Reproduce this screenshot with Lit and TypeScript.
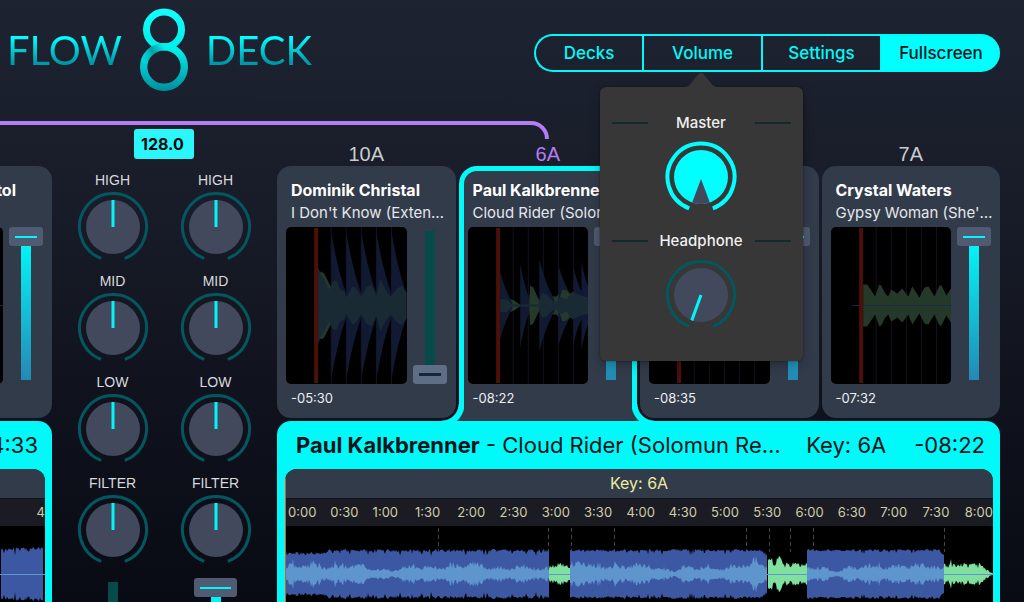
import { LitElement, html, svg, css, nothing } from "lit";
import { customElement, property } from "lit/decorators.js";
import { classMap } from "lit/directives/class-map.js";

/* ---------- wave helpers ---------- */

const noise = (seed: number) => {
  let s = seed;
  return () => {
    s = (s * 1664525 + 1013904223) % 4294967296;
    return s / 4294967296;
  };
};

type Amp = [number, number];

/** Closed outline mirrored around the mid line. */
const mirror = (points: Amp[], mid: number) => {
  const top = points.map(([x, a]) => `${x},${(mid - a).toFixed(1)}`);
  const bottom = [...points].reverse().map(([x, a]) => `${x},${(mid + a).toFixed(1)}`);
  return `M${top.join("L")}L${bottom.join("L")}Z`;
};

/** Dense band from x0 to x1 whose edge frays inwards by up to `jitter`. */
const band = (x0: number, x1: number, level: (x: number) => number, jitter: number, seed: number) => {
  const rnd = noise(seed);
  const pts: Amp[] = [];
  for (let x = x0; x <= x1; x += 1) {
    const spike = rnd() > 0.85 ? 1 : 0.45;
    pts.push([x, Math.max(0.5, level(x) - rnd() * jitter * spike)]);
  }
  return mirror(pts, 48);
};

/** Jagged band whose amplitude scatters in proportion to its level. */
const jagged = (x0: number, x1: number, level: (x: number) => number, seed: number) => {
  const rnd = noise(seed);
  const pts: Amp[] = [];
  for (let x = x0; x <= x1; x += 1) {
    const peak = rnd() > 0.9 ? 0.4 : 0;
    pts.push([x, Math.max(0.5, level(x) * (0.55 + rnd() * 0.55 + peak))]);
  }
  return mirror(pts, 48);
};

const swell = (x: number) => 7.5 + 1.5 * Math.sin(x / 9) + 1.5 * Math.sin(x / 3.7) + 2 * Math.sin(x / 23);

/* ---------- rotary knob ---------- */

@customElement("rotary-knob")
export class RotaryKnob extends LitElement {
  @property() label = "";
  @property() variant = "pointer";
  @property({ type: Number }) value = 50;
  @property({ type: Boolean, reflect: true }) panel = false;

  static styles = css`
    :host { display: block; }
    .knob { display: grid; justify-items: center; row-gap: 3px; }
    .name { font: 14px/16px "Liberation Sans", Arial, sans-serif; color: #d8dade; }
    .dial { display: grid; }
    .dial > * { grid-area: 1 / 1; width: 72px; height: 72px; margin: 0; }
    .input { opacity: 0; cursor: pointer; }
    .ring { fill: none; stroke: #04575f; stroke-width: 3; }
    .disc { fill: #42495c; }
    .hand { stroke: #00f6fb; stroke-width: 3; }
    .full .ring { stroke: #00ffff; stroke-width: 4; }
    .full .disc { fill: #00ffff; }
    .notch { fill: #42495c; }
    :host([panel]) .knob { row-gap: 8px; }
    :host([panel]) .name {
      display: grid;
      grid-template-columns: 36px 1fr 36px;
      align-items: center;
      justify-items: center;
      width: 100%;
      font: 500 15px/20px Inter, sans-serif;
      color: #f0f0f0;
    }
    :host([panel]) .name::before,
    :host([panel]) .name::after { content: ""; width: 36px; height: 2px; background: #13292d; }
  `;

  render() {
    const full = this.variant === "full";
    const angle = (this.value - 50) * 3.2;
    return html`
      <label class="knob">
        <span class="name">${this.label}</span>
        <span class="dial">
          <svg class=${classMap({ full })} viewBox="0 0 72 72" aria-hidden="true">
            <path class="ring" d="M24.2 67.4A33.5 33.5 0 1 1 47.8 67.4"></path>
            <circle class="disc" cx="36" cy="36" r="27"></circle>
            ${full
              ? svg`<path class="notch" d="M36 38L27.2 61.5A27 27 0 0 0 44.8 61.5Z"></path>`
              : svg`<path class="hand" d="M36 36V9" transform="rotate(${angle} 36 36)"></path>`}
          </svg>
          <input class="input" type="range" min="0" max="100" .value=${String(this.value)} />
        </span>
      </label>
    `;
  }
}

/* ---------- level fader ---------- */

@customElement("level-fader")
export class LevelFader extends LitElement {
  @property() label = "";
  @property({ type: Number }) value = 100;
  @property({ type: Boolean, reflect: true }) wide = false;

  static styles = css`
    :host { display: block; width: 34px; height: 157px; --knob: 34px; --mark: 22px; }
    :host([wide]) { width: 43px; --knob: 43px; --mark: 31px; }
    .fader {
      display: block;
      appearance: none;
      writing-mode: vertical-lr;
      direction: rtl;
      width: 100%;
      height: 100%;
      margin: 0;
      background: linear-gradient(#00ffff, #2489b4) center / 10px 149px no-repeat;
    }
    .fader.off { background-image: linear-gradient(#064b4a, #064b4a); }
    .fader::-webkit-slider-runnable-track { width: 100%; height: 100%; background: none; }
    .fader::-webkit-slider-thumb {
      appearance: none;
      width: var(--knob);
      height: 19px;
      border-radius: 3px;
      background: linear-gradient(#00f6fb, #00f6fb) center / var(--mark) 2px no-repeat, #505a70;
    }
    .fader.off::-webkit-slider-thumb {
      background: linear-gradient(#14283c, #14283c) center / var(--mark) 3px no-repeat, #5f6d85;
    }
  `;

  render() {
    return html`<input
      class=${classMap({ fader: true, off: this.value === 0 })}
      type="range" min="0" max="100"
      aria-label=${this.label}
      .value=${String(this.value)}
    />`;
  }
}

/* ---------- deck card ---------- */

const decays = (starts: Amp[], ends: Amp[]) =>
  starts
    .map(([x, a], i) => {
      const [ex, ea] = ends[i];
      const cx = x + (ex - x) * 0.4;
      const ca = ea + (a - ea) * 0.4;
      return `M${x},${78.5 - a}Q${cx},${78.5 - ca} ${ex},${78.5 - ea}V${78.5 + ea}Q${cx},${78.5 + ca} ${x},${78.5 + a}Z`;
    })
    .join("");

const m = (points: Amp[]) => mirror(points, 78.5);

const previews: Record<string, unknown> = {
  kicks: svg`
    <path class="low" d=${decays(
      [[32, 38], [45, 74], [60, 74], [75, 74], [90, 74], [105, 74]],
      [[45, 15], [60, 12], [75, 12], [90, 12], [105, 12], [120, 12]])}></path>
    <path class="high" d=${m([[32, 30], [35, 34], [38, 32], [42, 24], [45, 18], [45, 5], [32, 5]])}></path>
    <path class="body" d=${m([[32, 38], [34, 32], [38, 26], [43, 16], [47, 24], [50, 25], [54, 16], [58, 14], [60, 8], [66, 19], [69, 18], [75, 9], [80, 18], [85, 21], [90, 10], [94, 26], [99, 16], [104, 9], [110, 16], [115, 20], [120, 13]])}></path>`,
  breaks: svg`
    <path class="high" d=${m([[32, 4], [38, 8], [46, 5], [53, 0], [61, 2], [62, 20], [65, 18], [71, 5], [80, 9], [88, 9], [95, 17], [101, 12], [104, 12], [110, 10], [120, 6]])}></path>
    <path class="low" d=${decays(
      [[32, 34], [52, 42], [71, 46], [90, 40], [105, 39], [113, 44]],
      [[44, 3], [62, 4], [86, 6], [104, 8], [113, 14], [120, 18]])}></path>
    <path class="high" d=${m([[61, 2], [62, 20], [65, 16], [71, 3]])}></path>
    <path class="high" d=${m([[90, 4], [94, 16], [98, 15], [102, 11], [104, 5]])}></path>
    <path class="body" d=${m([[32, 6], [38, 7], [44, 1], [70, 1], [73, 12], [78, 11], [85, 4], [89, 4], [92, 9], [98, 6], [104, 14], [112, 10], [120, 8]])}></path>`,
  pads: svg`
    <path class="high" d=${m([[32, 21], [36, 21], [40, 15], [44, 9], [48, 21], [50, 20], [54, 12], [57, 9], [60, 16], [63, 14], [66, 12], [71, 17], [77, 9], [81, 19], [88, 8], [93, 18], [97, 19], [103, 9], [108, 20], [110, 20], [115, 10], [120, 18]])}></path>
    <path class="mid" d="M21 78.5H120"></path>`,
  flat: svg`<path class="mid" d="M21 78.5H120"></path>`,
};

@customElement("deck-card")
export class DeckCard extends LitElement {
  @property() artist = "";
  @property() track = "";
  @property() time = "";
  @property() preview = "flat";
  @property({ type: Number }) level = 100;
  @property({ type: Boolean, reflect: true }) active = false;
  @property({ type: Boolean, reflect: true }) tail = false;

  static styles = css`
    :host { display: block; min-width: 0; }
    .card {
      box-sizing: border-box;
      position: relative;
      height: 252px;
      padding: 12px 9px 11px;
      border-radius: 14px;
      background: #323b4a;
      font-family: Inter, sans-serif;
    }
    .artist, .track { padding-left: 5px; margin: 0; overflow: hidden; text-overflow: ellipsis; white-space: nowrap; }
    .artist { height: 24px; font-size: 16px; line-height: 24px; font-weight: 700; color: #fff; }
    .track { height: 22px; margin-right: -4px; font-size: 15px; line-height: 22px; color: #e4e7ec; }
    .deck { display: flex; gap: 6px; margin: 3px 0 5px; }
    .wave { flex: 1; min-width: 0; height: 157px; border-radius: 5px; background: #000; }
    .time { display: block; padding-left: 5px; font-size: 13px; line-height: 18px; color: #eceef2; }
    .grid { stroke: #12131d; stroke-width: 1; }
    .cue { fill: #4b1108; }
    .low { fill: #121a33; }
    .body { fill: #1a2a35; }
    .high { fill: #24392a; }
    .mid { stroke: #1c2a45; stroke-width: 1; fill: none; }
    :host([tail]) .artist { text-align: right; padding-right: 27px; }
    :host([active]) .card {
      height: 255px;
      margin-bottom: -3px;
      border: 5px solid #00faf9;
      border-bottom: 0;
      border-radius: 18px 18px 0 0;
      padding: 7px 4px 14px;
    }
    :host([active]) .card::before,
    :host([active]) .card::after {
      content: "";
      position: absolute;
      bottom: 0;
      width: 22px;
      height: 17px;
    }
    :host([active]) .card::before {
      left: -22px;
      background: radial-gradient(circle at 0 0, transparent 16px, #00faf9 17px, #00faf9 22px, #323b4a 23px);
    }
    :host([active]) .card::after {
      right: -22px;
      background: radial-gradient(circle at 100% 0, transparent 16px, #00faf9 17px, #00faf9 22px, #323b4a 23px);
    }
  `;

  render() {
    return html`
      <article class="card">
        <h3 class="artist">${this.artist}</h3>
        <p class="track">${this.track}</p>
        <div class="deck">
          <svg class="wave" viewBox="0 0 120 157" preserveAspectRatio="none" aria-hidden="true">
            <path class="grid" d="M45 0V157M60 0V157M75 0V157M90 0V157M105 0V157"></path>
            ${previews[this.preview]}
            <rect class="cue" x="28" y="1" width="4" height="155"></rect>
          </svg>
          <level-fader label="Volume" .value=${this.level}></level-fader>
        </div>
        <span class="time">${this.time}</span>
      </article>
    `;
  }
}

/* ---------- page ---------- */

interface Slot { key: string; artist: string; track: string; time: string; preview: string; level: number; active?: boolean; }

const slots: Slot[] = [
  { key: "10A", artist: "Dominik Christal", track: "I Don't Know (Extended Mix)", time: "-05:30", preview: "kicks", level: 0 },
  { key: "6A", artist: "Paul Kalkbrenner", track: "Cloud Rider (Solomun Remix)", time: "-08:22", preview: "breaks", level: 100, active: true },
  { key: "", artist: "", track: "", time: "-08:35", preview: "flat", level: 100 },
  { key: "7A", artist: "Crystal Waters", track: "Gypsy Woman (She's Homeless)", time: "-07:32", preview: "pads", level: 100 },
];

const bands = ["HIGH", "MID", "LOW", "FILTER"];
const ticks = Array.from({ length: 17 }, (_, i) => `${Math.floor(i / 2)}:${i % 2 ? "30" : "00"}`);

const bassBands = [
  band(0, 264, (x) => (x < 42 ? 22 : 25), 7, 11),
  band(285, 482, (x) => (x > 474 ? 25 - (x - 474) / 2 : 25), 6, 23),
  band(522, 659, (x) => (x > 654 ? 25 - (x - 654) : 25), 5, 37),
];
const midBands = [
  jagged(0, 264, swell, 41),
  jagged(285, 482, (x) => swell(x) + (x < 300 ? 4 : 0), 43),
  jagged(522, 659, swell, 47),
];
const highBands = [
  jagged(264, 285, (x) => 12 - Math.abs(x - 273) * 0.3, 53),
  jagged(483, 522, (x) => (x < 500 ? 15 : 11), 59),
  jagged(659, 708, (x) => (x > 698 ? (708 - x) * 0.8 : 10), 61),
];
const markers = [153, 263, 286, 329, 461, 484, 505, 528, 659];

@customElement("app-root")
export class AppRoot extends LitElement {
  static styles = css`
    :host {
      display: block;
      height: 100vh;
      overflow: hidden;
      background: linear-gradient(#1e2332, #181c28 35%, #10131d 65%, #080b14);
      font-family: Inter, sans-serif;
    }
    .page { position: relative; }
    .header { display: flex; justify-content: space-between; align-items: flex-start; padding: 8px 24px 34px 7px; }
    .logo { display: flex; align-items: center; gap: 18px; height: 84px; margin: 0; font: 400 40px/42px Lato, sans-serif; }
    .word {
      background: linear-gradient(#00ffff 20%, #0098a6 80%);
      -webkit-background-clip: text;
      background-clip: text;
      color: transparent;
    }
    .eight { width: 48px; height: 84px; }

    .nav { display: grid; grid-template-columns: 108px 119px 119px 120px; margin-top: 26px; }
    .item { position: relative; display: grid; }
    .tab {
      height: 38px;
      padding: 0;
      border: 2px solid #00faf9;
      border-right: 0;
      background: none;
      font: 500 17px/20px Inter, sans-serif;
      color: #00faf9;
    }
    .item:first-child .tab { border-radius: 19px 0 0 19px; }
    .item:last-child .tab { border-radius: 0 19px 19px 0; background: #00ffff; color: #06141c; }

    .popover {
      position: absolute;
      z-index: 10;
      top: 53px;
      left: 50%;
      box-sizing: border-box;
      width: 203px;
      margin-left: -102px;
      padding: 26px 12px 30px;
      display: grid;
      row-gap: 18px;
      border-radius: 6px;
      background: #373737;
      box-shadow: 0 0 2px #00000080, 0 4px 12px #00000040;
    }
    .arrow { position: absolute; top: -15px; left: 50%; width: 36px; height: 16px; margin-left: -18px; fill: #373737; }

    .link {
      position: absolute;
      box-sizing: border-box;
      top: 121px;
      left: 0;
      width: calc(278px + (100% - 301px) * 0.375);
      height: 18px;
      border: solid #b57cf6;
      border-width: 4px 4px 0 0;
      border-radius: 0 18px 0 0;
    }

    .stage { display: grid; grid-template-columns: 52px 225px minmax(0, 1fr); padding-right: 24px; }
    .side { display: grid; justify-content: end; grid-template-columns: 179px; align-content: start; overflow: hidden; }
    .spacer { height: 40px; }
    .keys { display: grid; grid-template-columns: repeat(4, minmax(0, 1fr)); gap: 3px; padding-top: 16px; height: 24px; }
    .key { font: 20px/24px "Liberation Sans", Arial, sans-serif; color: #c9cbd0; text-align: center; }
    .key.on { color: #b57cf6; }
    .cards { display: grid; grid-template-columns: repeat(4, minmax(0, 1fr)); gap: 3px; height: 252px; }

    .mixer { display: grid; justify-items: center; align-content: start; padding: 3px 1px 0 0; }
    .bpm {
      box-sizing: border-box;
      width: 60px;
      height: 30px;
      padding-left: 7px;
      margin-bottom: 13px;
      border-radius: 3px;
      background: #2bf6fa;
      color: #05080c;
      font: 700 16px/31px Inter, sans-serif;
    }
    .channels { display: grid; grid-template-columns: 103px 103px; row-gap: 10px; justify-items: center; }
    .channels level-fader { margin-top: 2px; }

    .player { margin-top: 3px; padding: 0 7px 8px 8px; border-radius: 14px 14px 0 0; background: #00faf9; color: #04141a; min-width: 0; }
    .title { display: flex; align-items: center; height: 48px; padding: 0 8px 0 11px; font-size: 22px; line-height: 30px; white-space: nowrap; }
    .song { flex: 1; min-width: 0; margin: 0; font-size: 22px; font-weight: 400; overflow: hidden; text-overflow: ellipsis; }
    .meta { margin-left: 12px; }
    .meta + .meta { margin-left: 28px; }
    .screen { overflow: hidden; border-radius: 12px 12px 0 0; background: #000; position: relative; }
    .keybar { height: 29px; background: #323b4a; text-align: center; font-size: 16px; line-height: 29px; color: #ecec9f; }
    .ruler { display: flex; height: 28px; background: #1b1b24; border-top: 1px solid #10141c; box-sizing: border-box; overflow: hidden; }
    .tick { flex: 0 0 5.976%; white-space: nowrap; font-size: 13px; line-height: 27px; color: #cfcda6; text-indent: 3px; }
    .overview { display: block; width: 100%; height: 96px; }
    .bass { fill: #3c58a3; }
    .mids { fill: #5f95cd; }
    .highs { fill: #80e0a0; }
    .axis { stroke: #5f95cd; stroke-width: 1; }
    .marker { stroke: #3b4650; stroke-width: 1; stroke-dasharray: 4 3; }
    .playhead { position: absolute; left: 0; top: 8px; bottom: 0; width: 1px; background: #ff4b12; }
    .side .title { justify-content: flex-end; padding-right: 7px; }
    .side .ruler { justify-content: flex-end; }
    .side .tick { flex: 0 0 6px; }
  `;

  private renderOverview() {
    return html`
      <svg class="overview" viewBox="0 0 708 96" preserveAspectRatio="none" aria-hidden="true">
        ${markers.map((x) => svg`<path class="marker" d="M${x}.5 2V26"></path>`)}
        ${bassBands.map((d) => svg`<path class="bass" d=${d}></path>`)}
        ${midBands.map((d) => svg`<path class="mids" d=${d}></path>`)}
        ${highBands.map((d) => svg`<path class="highs" d=${d}></path>`)}
        <path class="axis" d="M0 48.5H708"></path>
      </svg>
    `;
  }

  private renderVolume() {
    return html`
      <div class="popover" role="dialog" aria-label="Volume">
        <svg class="arrow" viewBox="0 0 36 16" aria-hidden="true">
          <path d="M0 16V15C5 15 7 13 9 10L16 1.500Q18 -0.500 20 1.500L27 10C29 13 31 15 36 15V16Z"></path>
        </svg>
        <rotary-knob panel label="Master" variant="full" .value=${100}></rotary-knob>
        <rotary-knob panel label="Headphone" .value=${0}></rotary-knob>
      </div>
    `;
  }

  render() {
    return html`
      <div class="page">
        <header class="header">
          <h1 class="logo" aria-label="Flow 8 Deck">
            <span class="word">FLOW</span>
            <svg class="eight" viewBox="0 0 48 84" aria-hidden="true">
              <defs>
                <linearGradient id="ring" gradientUnits="userSpaceOnUse" x1="0" y1="0" x2="0" y2="84">
                  <stop offset="0" stop-color="#12ffff"></stop>
                  <stop offset="0.5" stop-color="#00eee8"></stop>
                  <stop offset="1" stop-color="#008b9c"></stop>
                </linearGradient>
                <linearGradient id="fold" gradientUnits="userSpaceOnUse" x1="4" y1="52" x2="24" y2="38">
                  <stop offset="0" stop-color="#007f8a" stop-opacity="0"></stop>
                  <stop offset="0.5" stop-color="#007f8a" stop-opacity="0.7"></stop>
                  <stop offset="1" stop-color="#007f8a" stop-opacity="0"></stop>
                </linearGradient>
              </defs>
              <circle cx="24" cy="21.500" r="17.500" fill="none" stroke="url(#ring)" stroke-width="7"></circle>
              <circle cx="24" cy="59" r="20.300" fill="none" stroke="url(#ring)" stroke-width="7.400"></circle>
              <path d="M5 52A20.300 20.300 0 0 1 24 38.700" fill="none" stroke="url(#fold)" stroke-width="7.400"></path>
            </svg>
            <span class="word">DECK</span>
          </h1>
          <nav class="nav" aria-label="Main">
            <div class="item"><button class="tab" type="button">Decks</button></div>
            <div class="item">
              <button class="tab" type="button" aria-expanded="true">Volume</button>
              ${this.renderVolume()}
            </div>
            <div class="item"><button class="tab" type="button">Settings</button></div>
            <div class="item"><button class="tab" type="button">Fullscreen</button></div>
          </nav>
        </header>

        <div class="link"></div>

        <main class="stage">
          <section class="side" aria-label="Left deck">
            <div class="spacer"></div>
            <deck-card tail artist="tol"></deck-card>
            <div class="player">
              <div class="title"><span>-04:33</span></div>
              <div class="screen">
                <div class="keybar"></div>
                <div class="ruler"><span class="tick">4</span></div>
                <svg class="overview" viewBox="544 0 164 96" preserveAspectRatio="none" aria-hidden="true">
                  <path class="bass" d=${band(664, 706, () => 27, 9, 71)}></path>
                  <path class="axis" d="M544 48.5H708"></path>
                </svg>
              </div>
            </div>
          </section>

          <section class="mixer" aria-label="Mixer">
            <output class="bpm">128.0</output>
            <div class="channels">
              ${bands.map((b) => [0, 1].map(() => html`<rotary-knob .label=${b}></rotary-knob>`))}
              <level-fader wide label="Channel 1" .value=${0}></level-fader>
              <level-fader wide label="Channel 2" .value=${100}></level-fader>
            </div>
          </section>

          <section aria-label="Right deck">
            <div class="keys">
              ${slots.map((s) => html`<span class=${classMap({ key: true, on: !!s.active })}>${s.key || nothing}</span>`)}
            </div>
            <div class="cards">
              ${slots.map(
                (s) => html`<deck-card
                  .artist=${s.artist} .track=${s.track} .time=${s.time}
                  .preview=${s.preview} .level=${s.level} ?active=${!!s.active}
                ></deck-card>`
              )}
            </div>
            <div class="player">
              <div class="title">
                <h2 class="song"><strong>Paul Kalkbrenner</strong> - Cloud Rider (Solomun Remix)</h2>
                <span class="meta">Key: 6A</span>
                <span class="meta">-08:22</span>
              </div>
              <div class="screen">
                <div class="keybar">Key: 6A</div>
                <div class="ruler">${ticks.map((t) => html`<span class="tick">${t}</span>`)}</div>
                ${this.renderOverview()}
                <div class="playhead"></div>
              </div>
            </div>
          </section>
        </main>
      </div>
    `;
  }
}
